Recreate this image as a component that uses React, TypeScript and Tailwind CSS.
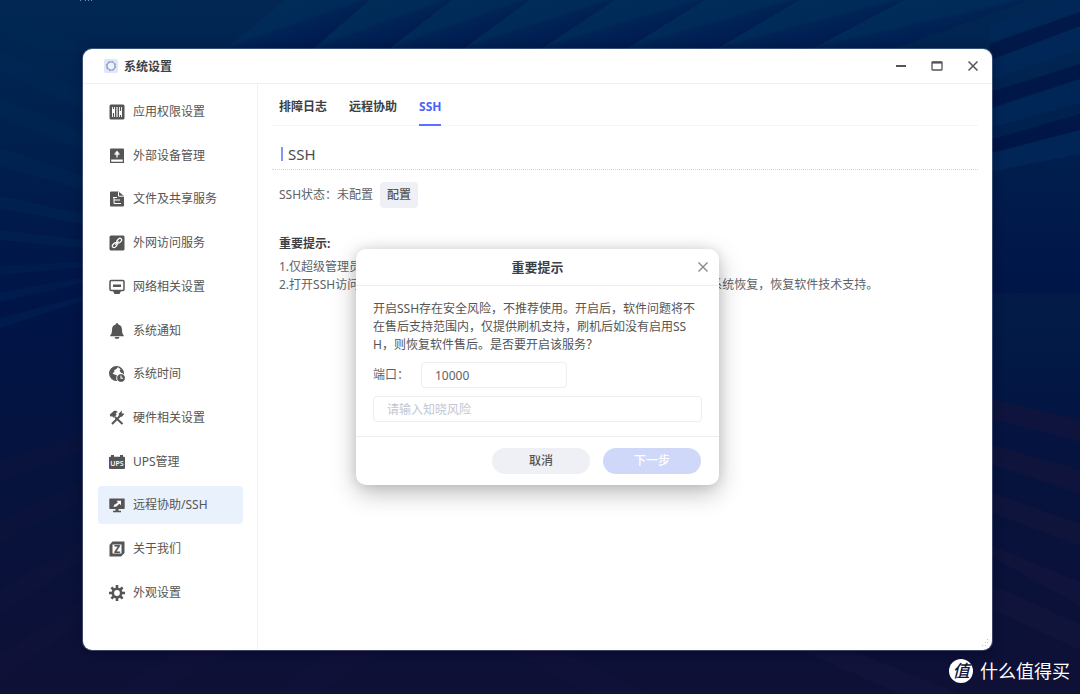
import { useState } from 'react'
import type { ReactNode } from 'react'
import clsx from 'clsx'

function Icon({ children }: { children: ReactNode }) {
  return (
    <svg viewBox="0 0 16 16" className="w-4 h-4 shrink-0" fill="#555" aria-hidden="true">
      {children}
    </svg>
  )
}

const navigation = [
  {
    name: '应用权限设置',
    icon: (
      <Icon>
        <rect x="0.5" y="0.5" width="15" height="15" rx="1.5" />
        <path d="M3 3h3v10H3zM10 3h3v10h-3z" fill="#fff" />
        <path d="M8 3v10" stroke="#fff" strokeWidth="1.2" />
        <path d="M4.500 3v2M4.500 9v4M11.500 3v4M11.500 11v2" stroke="#555" strokeWidth="1.2" />
      </Icon>
    )
  },
  {
    name: '外部设备管理',
    icon: (
      <Icon>
        <path d="M2 0.5h12a1 1 0 0 1 1 1V11.500H1V1.500a1 1 0 0 1 1-1z" />
        <path d="M8 9.500V4M5.500 6h5" stroke="#fff" strokeWidth="1.3" />
        <path d="M8 2.500l2 2.500H6z" fill="#fff" />
        <path d="M1.600 11v3.400h12.800V11" fill="none" stroke="#555" strokeWidth="1.2" />
      </Icon>
    )
  },
  {
    name: '文件及共享服务',
    icon: (
      <Icon>
        <path d="M2 0.500h7.500L15 5v9.500a1 1 0 0 1-1 1H2a1 1 0 0 1-1-1v-13a1 1 0 0 1 1-1z" />
        <path d="M9.500 1v4.200H15M4 6.500h4M5 6.500v6M5 9h6M5 12.500h7" fill="none" stroke="#fff" strokeWidth="1" />
      </Icon>
    )
  },
  {
    name: '外网访问服务',
    icon: (
      <Icon>
        <rect x="0.5" y="0.5" width="15" height="15" rx="1.5" />
        <g fill="none" stroke="#fff" strokeWidth="1.300" strokeLinecap="round">
          <rect x="7.500" y="4" width="5.500" height="3.400" rx="1.700" transform="rotate(-45 10.200 5.700)" />
          <rect x="3" y="8.500" width="5.500" height="3.400" rx="1.700" transform="rotate(-45 5.700 10.200)" />
          <path d="M6.800 9.200l2.400-2.400" />
        </g>
      </Icon>
    )
  },
  {
    name: '网络相关设置',
    icon: (
      <Icon>
        <rect x="1" y="1.500" width="14" height="10" rx="1.200" fill="none" stroke="#555" strokeWidth="1.500" />
        <path d="M4 5.500h8v2.500H4zM4 12h8l-1.500 3h-5z" />
      </Icon>
    )
  },
  {
    name: '系统通知',
    icon: (
      <Icon>
        <path d="M8 .3c.8 0 1.300.5 1.300 1.300C11.800 2.200 13 4.200 13 6.700c0 3.300.6 4.600 1.700 5.300v1.300H1.300V12C2.400 11.300 3 10 3 6.700c0-2.500 1.200-4.500 3.700-5.100C6.700.8 7.200.3 8 .3zM5.500 14h5l-1 1.700h-3z" />
      </Icon>
    )
  },
  {
    name: '系统时间',
    icon: (
      <Icon>
        <circle cx="7.500" cy="7.500" r="6.900" fill="none" stroke="#555" strokeWidth="1.200" />
        <path d="M1.500 3.800C3 1.500 5.500.6 8.500.8L7.500 3 5 4.200 5.500 6 3.500 7l1.500 1.500 2.500.5.5 2-1 3.500C3.500 13.500 1 11 1 7.500z" />
        <path d="M10 1.500c2.500.8 4 2.800 4.300 5.500L12.500 7 10.500 5l1-1.500z" />
        <circle cx="12" cy="12" r="4.300" stroke="#fff" strokeWidth=".8" />
        <path d="M12 9.600v2.700h2" fill="none" stroke="#fff" strokeWidth="1.100" />
      </Icon>
    )
  },
  {
    name: '硬件相关设置',
    icon: (
      <Icon>
        <path d="M3 14L12 5M6 7l7.500 7" fill="none" stroke="#555" strokeWidth="2" />
        <path d="M.6 4.800L4.800.9c1.400-.5 3 0 4 1L6.800 3l.8 1.700-3 3-1.700-1.600-1 .8zM9.800 3.500L13 .6l-.3 2.700 2.800.4-2.700 3-3-.3z" />
      </Icon>
    )
  },
  {
    name: 'UPS管理',
    icon: (
      <Icon>
        <path d="M2 1h3v1.700h6V1h3v1.700h1a1 1 0 0 1 1 1V14a1 1 0 0 1-1 1H1a1 1 0 0 1-1-1V3.700a1 1 0 0 1 1-1h1z" />
        <text x="8" y="11.500" textAnchor="middle" fill="#fff" fontSize="7" fontWeight="600">UPS</text>
      </Icon>
    )
  },
  {
    name: '远程协助/SSH',
    icon: (
      <Icon>
        <path d="M1 1.500h14a.7.700 0 0 1 .7.700v9a.7.700 0 0 1-.7.700H9.500v1.800H12v1.500H4v-1.500h2.500v-1.800H1a.7.700 0 0 1-.7-.7v-9a.7.700 0 0 1 .7-.7z" />
        <path d="M7.500 3.800H12v4.500l-1.600-1.500-1.900 1.800L7 9.800H4.500l.7-2 1.600-.8L9 5.300z" fill="#fff" />
      </Icon>
    )
  },
  {
    name: '关于我们',
    icon: (
      <Icon>
        <path d="M3.500 0.500h12V12L12 15.500H0.500V4z" />
        <rect x="3.500" y="3.500" width="9" height="9" fill="#fff" />
        <text x="8" y="11.800" textAnchor="middle" fontSize="10.500" fontWeight="800">Z</text>
      </Icon>
    )
  },
  {
    name: '外观设置',
    icon: (
      <Icon>
        <circle cx="8" cy="8" r="4.200" fill="none" stroke="#555" strokeWidth="2.600" />
        <path
          d="M8 0v3M8 13v3M0 8h3M13 8h3M2.400 2.400l2.100 2.100M11.500 11.500l2.100 2.100M13.600 2.400l-2.100 2.100M4.500 11.500l-2.100 2.100"
          stroke="#555"
          strokeWidth="2.600"
        />
      </Icon>
    )
  }
]

const tabs = ['排障日志', '远程协助', 'SSH']

function Wallpaper() {
  return (
    <svg
      viewBox="0 0 1080 694"
      preserveAspectRatio="none"
      className="absolute inset-0 w-full h-full"
      aria-hidden="true"
    >
      <defs>
        <linearGradient id="sky" x1="0" y1="0" x2="0" y2="1">
          <stop offset="0" stopColor="#012752" />
          <stop offset=".2" stopColor="#00204e" />
          <stop offset=".42" stopColor="#001548" />
          <stop offset=".7" stopColor="#06133d" />
          <stop offset="1" stopColor="#0f1036" />
        </linearGradient>
        <linearGradient id="blade" x1="0" y1="0" x2="1" y2="1">
          <stop offset=".22" stopColor="#002d58" />
          <stop offset=".46" stopColor="#002a58" />
          <stop offset=".5" stopColor="#002355" />
          <stop offset=".76" stopColor="#001a50" />
        </linearGradient>
        <linearGradient id="floor" x1="0" y1="0" x2="0" y2="1">
          <stop offset="0" stopColor="#031c46" />
          <stop offset="1" stopColor="#031c46" stopOpacity="0" />
        </linearGradient>
      </defs>
      <rect width="1080" height="694" fill="url(#sky)" />

      {/* upper fan */}
      <g fill="url(#blade)">
        <path d="M285 0H370L312 50H225z" />
        <path d="M370 0H452L388 50H312z" />
        <path d="M452 0H530L462 50H388z" />
        <path d="M530 0H615L540 50H462z" />
        <path d="M615 0H705L625 50H540z" />
        <path d="M705 0H800L715 50H625z" />
        <path d="M800 0H905L810 50H715z" />
        <path d="M905 0H1030L890 50H810z" />
      </g>
      <g fill="#002a55" opacity=".4">
        <path d="M0 8L88 50H40L0 28z" />
        <path d="M70 0L150 36L190 0z" />
        <path d="M0 52L83 90V110L0 70z" />
        <path d="M0 98L83 132V150L0 118z" />
        <path d="M0 148L83 176V190L0 166z" />
        <path d="M0 196L83 214V224L0 208z" />
        <path d="M0 230L83 240V248L0 240z" />
      </g>
      <g fill="#00285a" opacity=".35">
        <path d="M0 266L83 262V267L0 275z" />
        <path d="M0 292L83 278V283L0 302z" />
        <path d="M0 318L83 296V301L0 328z" />
      </g>
      <g fill="#00285a" opacity=".75">
        <path d="M990 24L1080 -8V12L990 42z" />
        <path d="M990 60L1080 26V50L990 80z" />
        <path d="M990 109L1080 79V103L990 128z" />
        <path d="M990 154L1080 130V154L990 172z" />
      </g>
      <g fill="#000b40" opacity=".45">
        <path d="M990 44L1080 12V26L990 60z" />
        <path d="M990 92L1080 64V79L990 108z" />
        <path d="M990 140L1080 114V130L990 153z" />
      </g>

      {/* lower fan */}
      <rect x="990" y="293" width="90" height="150" fill="url(#floor)" />
      <g fill="#13153c" opacity=".7">
        <path d="M990 399L1080 420V442L990 418z" />
        <path d="M990 444L1080 470V494L990 464z" />
        <path d="M990 492L1080 524V546L990 512z" />
        <path d="M990 545L1080 582V606L990 556z" />
        <path d="M990 584L1080 624V650L990 608z" />
        <path d="M850 650L960 694H900L800 650z" />
      </g>
      <g fill="#13153c" opacity=".35">
        <path d="M560 650L650 694H590L510 650z" />
        <path d="M83 430L0 462V482L83 450z" />
        <path d="M83 480L0 520V544L83 500z" />
        <path d="M83 540L0 590V614L83 560z" />
        <path d="M83 600L0 656V680L83 620z" />
        <path d="M180 650L110 694H160L230 650z" />
        <path d="M330 650L270 694H320L380 650z" />
      </g>
      <path d="M80 0l1 1M86 0l-1 1M88 0l1 1M92 0l-1 1" stroke="#7d8da8" strokeWidth="1" />
    </svg>
  )
}

function Sidebar({ active, onSelect }: { active: string; onSelect: (name: string) => void }) {
  return (
    <nav className="w-[175px] shrink-0 border-r border-[#f0f1f3] flex flex-col justify-between px-[15px] pt-[9px] pb-[38px]">
      {navigation.map((item) => (
        <button
          key={item.name}
          type="button"
          onClick={() => onSelect(item.name)}
          className={clsx(
            'flex items-center gap-2 h-[38px] pl-[11px] -mr-px rounded text-left text-[#555]',
            item.name === active && 'bg-[#e9f1fd]'
          )}
        >
          {item.icon}
          <span>{item.name}</span>
        </button>
      ))}
    </nav>
  )
}

function ConfirmDialog({ onClose }: { onClose: () => void }) {
  const [port, setPort] = useState('10000')
  const [risk, setRisk] = useState('')

  return (
    <div className="absolute inset-0 flex items-center justify-center">
      <div
        role="dialog"
        aria-labelledby="dialog-title"
        className="w-[363px] bg-white rounded-[10px] shadow-[0_8px_24px_rgba(0,0,0,0.26),0_0_12px_rgba(0,0,0,0.1)]"
      >
        <div className="relative flex items-center justify-center h-[37px] border-b border-[#ededef]">
          <h2 id="dialog-title" className="text-[13px] font-bold text-[#3c3f44]">重要提示</h2>
          <button
            type="button"
            aria-label="关闭"
            onClick={onClose}
            className="absolute right-2 flex items-center justify-center w-4 h-4"
          >
            <svg viewBox="0 0 10 10" className="w-[10px] h-[10px]" stroke="#85888e" strokeWidth="1.400">
              <path d="M.5.5l9 9M9.500.5l-9 9" />
            </svg>
          </button>
        </div>

        <div className="px-[17px] pt-[14px] pb-[14px]">
          <p className="whitespace-nowrap leading-[18px] text-[#555]">
            开启SSH存在安全风险，不推荐使用。开启后，软件问题将不
            <br />
            在售后支持范围内，仅提供刷机支持，刷机后如没有启用SS
            <br />
            H，则恢复软件售后。是否要开启该服务？
          </p>
          <div className="flex items-center mt-2">
            <label htmlFor="port" className="w-12">端口：</label>
            <input
              id="port"
              value={port}
              onChange={(e) => setPort(e.target.value)}
              className="w-[146px] h-[26px] px-[13px] rounded border border-[#edeef2] text-[#606266] outline-none"
            />
          </div>
          <input
            aria-label="请输入知晓风险"
            placeholder="请输入知晓风险"
            value={risk}
            onChange={(e) => setRisk(e.target.value)}
            className="block w-full h-[26px] mt-2 px-[13px] rounded border border-[#edeef2] placeholder:text-[#c3c6d0] outline-none"
          />
        </div>

        <div className="flex items-center justify-end gap-[13px] h-[49px] px-[18px] border-t border-[#ededef]">
          <button type="button" onClick={onClose} className="w-[98px] h-[26px] rounded-full bg-[#eff0f5] font-medium text-[#555]">
            取消
          </button>
          <button type="button" disabled className="w-[98px] h-[26px] rounded-full bg-[#cfd8f8] font-medium text-white">
            下一步
          </button>
        </div>
      </div>
    </div>
  )
}

export default function App() {
  const [active, setActive] = useState('远程协助/SSH')
  const [tab, setTab] = useState('SSH')
  const [open, setOpen] = useState(true)

  return (
    <div className="relative flex min-h-screen pt-[49px] pb-11 pl-[83px] pr-[88px] bg-[#04153f] font-['Noto_Sans','Noto_Sans_CJK_SC',sans-serif] text-[12px] leading-[18px] text-[#606266]">
      <Wallpaper />

      <div className="relative flex-1 flex flex-col min-w-0 bg-white rounded-[9px] shadow-[0_0_0_1px_rgba(160,175,210,0.35),0_2px_12px_rgba(0,0,20,0.4)]">
        {/* Title bar */}
        <header className="flex items-center h-[35px] shrink-0 pl-[21px] pr-px border-b border-[#eeeff1]">
          <svg viewBox="0 0 14 14" className="w-[14px] h-[14px] mr-[6px]" aria-hidden="true">
            <rect width="14" height="14" rx="2" fill="#dfe7fb" />
            <circle cx="7" cy="7" r="4" fill="#eef2ff" stroke="#8d95bd" strokeWidth="1.200" />
            <circle cx="7" cy="7" r="4.800" fill="none" stroke="#8d95bd" strokeWidth=".8" strokeDasharray="1.900 1.870" />
          </svg>
          <h1 className="flex-1 pt-[2px] font-bold text-[#3c3f44]">系统设置</h1>
          <button type="button" aria-label="最小化" className="flex items-center justify-center w-9 h-8">
            <svg viewBox="0 0 12 12" className="w-3 h-3" stroke="#555" strokeWidth="2"><path d="M1 6h10" /></svg>
          </button>
          <button type="button" aria-label="最大化" className="flex items-center justify-center w-9 h-8">
            <svg viewBox="0 0 12 12" className="w-3 h-3" fill="none" stroke="#555">
              <rect x="1" y="2" width="10" height="8" rx=".5" strokeWidth="1.300" />
              <path d="M1 2.600h10" strokeWidth="2" />
            </svg>
          </button>
          <button type="button" aria-label="关闭窗口" className="flex items-center justify-center w-9 h-8">
            <svg viewBox="0 0 12 12" className="w-3 h-3" stroke="#555" strokeWidth="1.500"><path d="M1.500 1.500l9 9M10.500 1.500l-9 9" /></svg>
          </button>
        </header>

        <div className="relative flex-1 flex">
          <Sidebar active={active} onSelect={setActive} />

          <main className="flex-1 min-w-0 px-[14px]">
            <div role="tablist" className="flex gap-[22px] pl-[7px] shadow-[inset_0_-1px_0_#f3f4f6]">
              {tabs.map((name) => (
                <button
                  key={name}
                  type="button"
                  role="tab"
                  aria-selected={name === tab}
                  onClick={() => setTab(name)}
                  className={clsx(
                    'h-[42px] pt-[6px] border-b-2 font-bold',
                    name === tab ? 'border-[#5b72fb] text-[#4a62fa]' : 'border-transparent text-[#3c3f44]'
                  )}
                >
                  {name}
                </button>
              ))}
            </div>

            <div className="flex items-center gap-[5px] h-11 pt-3 pl-[9px] border-b border-dotted border-[#d4d6da]">
              <span className="w-[2px] h-[14px] bg-[#8494fb]" />
              <h2 className="text-[15px] text-[#4a4c50]">SSH</h2>
            </div>

            <div className="pl-[7px]">
              <div className="flex items-center gap-[7px] mt-3">
                <span>SSH状态：未配置</span>
                <button
                  type="button"
                  onClick={() => setOpen(true)}
                  className="h-[26px] px-[7px] rounded bg-[#eff0f5] font-medium text-[#555]"
                >
                  配置
                </button>
              </div>
              <h3 className="mt-[27px] font-bold text-[#3c3f44]">重要提示:</h3>
              <ol className="mt-[5px] whitespace-nowrap">
                <li>1.仅超级管理员可以使用SSH访问。</li>
                <li>2.打开SSH访问后，软件问题将不在售后支持范围内，仅提供刷机支持，刷机后 可系统恢复，恢复软件技术支持。</li>
              </ol>
            </div>
          </main>

          {open && <ConfirmDialog onClose={() => setOpen(false)} />}
        </div>

        {/* Resize grip */}
        <svg viewBox="0 0 8 8" className="absolute right-[3px] bottom-[3px] w-2 h-2" fill="#b9bfdc" aria-hidden="true">
          <path d="M6 0h1v1H6zM4 3h1v1H4zM6 3h1v1H6zM1 6h1v1H1zM4 6h1v1H4z" />
        </svg>
      </div>

      {/* Site watermark */}
      <div className="absolute right-[10px] bottom-[11px] flex items-center gap-[7px] text-white">
        <span className="flex items-center justify-center w-6 h-6 rounded-full bg-white text-[17px] font-medium italic text-[#10143a]">
          值
        </span>
        <span className="text-[18px]">什么值得买</span>
      </div>
    </div>
  )
}
